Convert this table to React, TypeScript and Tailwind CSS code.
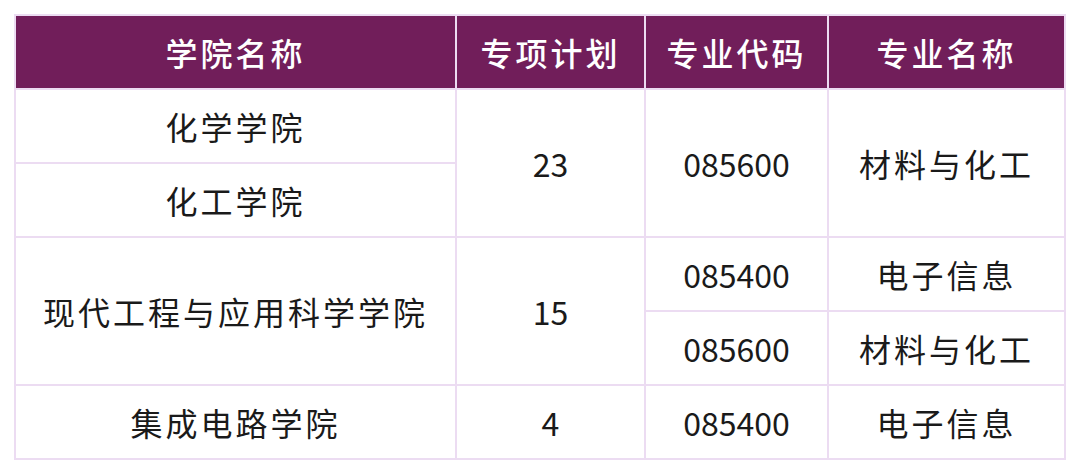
const head = ["学院名称", "专项计划", "专业代码", "专业名称"];

const cell = "border-2 border-[#ecdcf2] text-center align-middle text-[#1a1a1a]";
const cjk = `${cell} tracking-[3px]`;

export default function App() {
  return (
    <div
      className="w-[1080px] h-[474px] bg-white pt-[14px] pl-[14px]"
      style={{ fontFamily: '"Noto Sans CJK SC", "Noto Sans", sans-serif' }}
    >
      <table className="border-collapse table-fixed text-[32px] leading-none">
        <colgroup>
          <col className="w-[441px]" />
          <col className="w-[189px]" />
          <col className="w-[183px]" />
          <col className="w-[237px]" />
        </colgroup>
        <thead>
          <tr className="h-[74px] bg-[#711e5a]">
            {head.map((h) => (
              <th
                key={h}
                className="border-2 border-[#ecdcf2] text-center align-middle font-medium text-white tracking-[3px]"
              >
                {h}
              </th>
            ))}
          </tr>
        </thead>
        <tbody>
          <tr className="h-[74px]">
            <td className={cjk}>化学学院</td>
            <td className={cell} rowSpan={2}>23</td>
            <td className={cell} rowSpan={2}>085600</td>
            <td className={cjk} rowSpan={2}>材料与化工</td>
          </tr>
          <tr className="h-[74px]">
            <td className={cjk}>化工学院</td>
          </tr>
          <tr className="h-[74px]">
            <td className={cjk} rowSpan={2}>现代工程与应用科学学院</td>
            <td className={cell} rowSpan={2}>15</td>
            <td className={cell}>085400</td>
            <td className={cjk}>电子信息</td>
          </tr>
          <tr className="h-[74px]">
            <td className={cell}>085600</td>
            <td className={cjk}>材料与化工</td>
          </tr>
          <tr className="h-[74px]">
            <td className={cjk}>集成电路学院</td>
            <td className={cell}>4</td>
            <td className={cell}>085400</td>
            <td className={cjk}>电子信息</td>
          </tr>
        </tbody>
      </table>
    </div>
  );
}
